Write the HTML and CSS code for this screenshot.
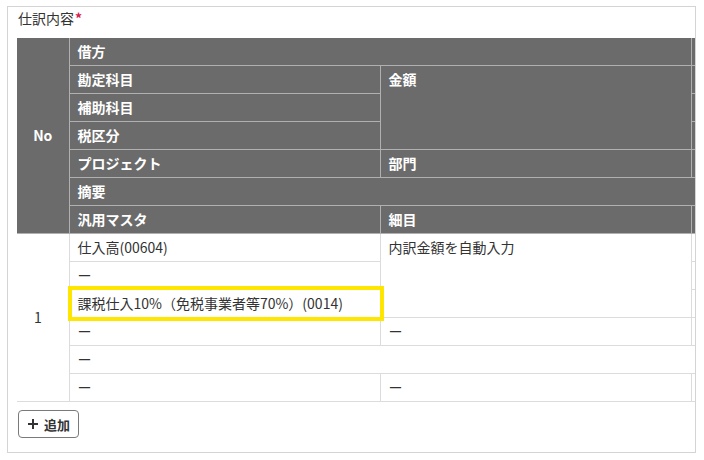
FILE: index.html
```html
<!DOCTYPE html>
<html lang="ja">

<head>
    <meta charset="UTF-8">
    <meta name="viewport" content="width=device-width, initial-scale=1.0">
    <title>仕訳内容</title>
    <link rel="stylesheet" href="styles.css">
</head>

<body>
    <section class="panel">
        <div class="panel-title">仕訳内容<span class="required">*</span></div>

        <table class="journal">
            <colgroup>
                <col class="col-no">
                <col class="col-item">
                <col class="col-item">
                <col class="col-item">
                <col class="col-item">
            </colgroup>
            <thead>
                <tr>
                    <th rowspan="7" class="no">No</th>
                    <th colspan="2">借方</th>
                    <th colspan="2"></th>
                </tr>
                <tr>
                    <th>勘定科目</th>
                    <th rowspan="3">金額</th>
                    <th></th>
                    <th rowspan="3"></th>
                </tr>
                <tr>
                    <th>補助科目</th>
                    <th></th>
                </tr>
                <tr>
                    <th>税区分</th>
                    <th></th>
                </tr>
                <tr>
                    <th>プロジェクト</th>
                    <th>部門</th>
                    <th></th>
                    <th></th>
                </tr>
                <tr>
                    <th colspan="4">摘要</th>
                </tr>
                <tr>
                    <th>汎用マスタ</th>
                    <th>細目</th>
                    <th></th>
                    <th></th>
                </tr>
            </thead>
            <tbody>
                <tr>
                    <td rowspan="6" class="no">1</td>
                    <td>仕入高(00604)</td>
                    <td rowspan="3">内訳金額を自動入力</td>
                    <td></td>
                    <td rowspan="3"></td>
                </tr>
                <tr>
                    <td>ー</td>
                    <td></td>
                </tr>
                <tr>
                    <td class="highlight">課税仕入10%（免税事業者等70%）(0014)</td>
                    <td></td>
                </tr>
                <tr>
                    <td>ー</td>
                    <td>ー</td>
                    <td></td>
                    <td></td>
                </tr>
                <tr>
                    <td colspan="4">ー</td>
                </tr>
                <tr>
                    <td>ー</td>
                    <td>ー</td>
                    <td></td>
                    <td></td>
                </tr>
            </tbody>
        </table>

        <button class="add-button">
            <svg width="10" height="10" viewBox="0 0 10 10">
                <path d="M5 0V10M0 5H10" stroke="#333" stroke-width="2" fill="none" />
            </svg>
            追加
        </button>
    </section>
</body>

</html>
```

FILE: styles.css
```css
body {
    margin: 0;
    font-family: "Noto Sans CJK JP", "Noto Sans", sans-serif;
    color: #333;
    background: #fff;
}

.panel {
    margin: 6px 8px 0 7px;
    padding: 1px 10px 14px 9px;
    border: 1px solid #d4d4d4;
    overflow: hidden;
}

.panel-title {
    font-size: 14px;
    line-height: 20px;
    margin-left: 1px;
}

.required {
    color: #d81b50;
    font-weight: bold;
    margin-left: 1px;
}

.journal {
    margin-top: 10px;
    border-collapse: collapse;
    table-layout: fixed;
    width: 1296px;
    font-size: 14px;
}

.col-no {
    width: 52px;
}

.col-item {
    width: 311px;
}

.journal th,
.journal td {
    height: 19px;
    padding: 4px 8px;
    line-height: 19px;
    text-align: left;
    vertical-align: top;
    white-space: nowrap;
}

.journal th {
    background-color: #6b6b6b;
    color: #fff;
    font-weight: bold;
    border: 1px solid #b0b0b0;
}

.journal thead tr:first-child th {
    border-top: none;
}

.journal td {
    background-color: #fff;
    border: 1px solid #dcdcdc;
}

.journal th.no {
    text-align: center;
    vertical-align: middle;
    border-left: none;
}

.journal td.no {
    vertical-align: middle;
    padding-left: 17px;
    border-left: none;
}

.journal td.highlight {
    position: relative;
}

.journal td.highlight::after {
    content: "";
    position: absolute;
    top: -4px;
    bottom: -4px;
    left: -2px;
    right: -4px;
    border: 4px solid #ffe600;
}

.add-button {
    margin: 8px 0 0 1px;
    display: flex;
    align-items: center;
    gap: 6px;
    height: 28px;
    padding: 0 8px 0 9px;
    background: #fff;
    border: 1px solid #7a7a7a;
    border-radius: 4px;
    font-family: inherit;
    font-size: 13px;
    font-weight: bold;
    color: #333;
}
```
